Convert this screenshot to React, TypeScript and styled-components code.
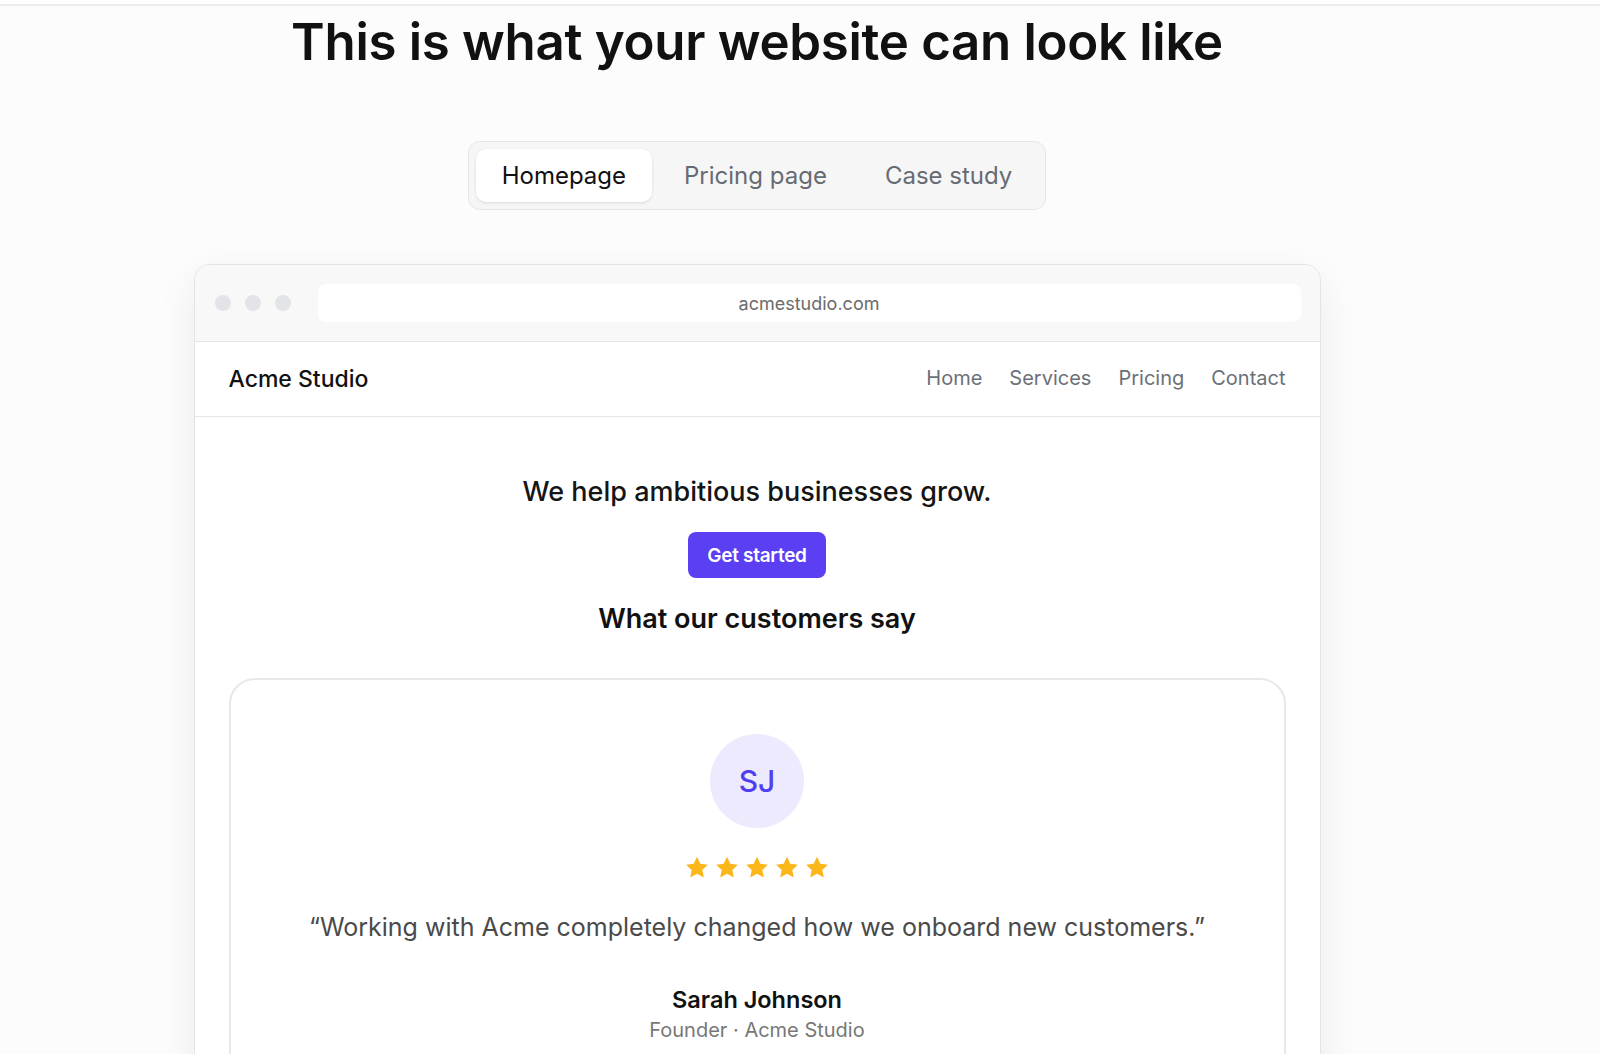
import React from "react";
import styled, { createGlobalStyle } from "styled-components";

const Global = createGlobalStyle`
  html, body { margin: 0; padding: 0; background: #fcfcfc; }
  body { font-family: Inter, "Noto Sans", Arial, sans-serif; color: #111; overflow: hidden; height: 1054px; }
`;

const TopRule = styled.div`
  height: 4px;
  background: #ffffff;
  border-bottom: 2px solid #ececec;
`;

const Column = styled.div`
  width: 1514px;
  display: flex;
  flex-direction: column;
  align-items: center;
`;

const Title = styled.h1`
  margin: 5px 0 0;
  font-size: 51px;
  line-height: 62px;
  font-weight: 600;
  letter-spacing: -0.3px;
  color: #111;
`;

const Tabs = styled.div`
  margin-top: 68px;
  display: flex;
  gap: 6px;
  padding: 7px 7px;
  background: #f6f6f6;
  border: 1px solid #e6e6e6;
  border-radius: 12px;
`;

const Tab = styled.button<{ $active?: boolean }>`
  font-family: Inter, Arial, sans-serif;
  font-size: 24px;
  font-weight: 400;
  height: 53px;
  padding: 0 26px;
  border: none;
  border-radius: 10px;
  background: ${(p) => (p.$active ? "#ffffff" : "transparent")};
  color: ${(p) => (p.$active ? "#111" : "#666b73")};
  box-shadow: ${(p) => (p.$active ? "0 1px 3px rgba(0,0,0,0.12)" : "none")};
`;

const Browser = styled.div`
  margin-top: 54px;
  width: 1125px;
  border: 1px solid #e4e4e6;
  border-radius: 16px;
  background: #fff;
  box-shadow: 0 12px 40px rgba(0, 0, 0, 0.07);
  overflow: hidden;
`;

const ChromeBar = styled.div`
  height: 76px;
  background: #f8f8f9;
  border-bottom: 1px solid #e6e6e8;
  display: flex;
  align-items: center;
  padding: 0 19px 0 20px;
`;

const Dots = styled.div`
  display: flex;
  gap: 14px;
  margin-right: 27px;
`;

const Dot = styled.span`
  width: 16px;
  height: 16px;
  border-radius: 50%;
  background: #e3e4e7;
`;

const UrlBar = styled.div`
  flex: 1;
  height: 38px;
  border-radius: 8px;
  background: #fff;
  display: flex;
  align-items: center;
  justify-content: center;
  font-size: 18px;
  color: #6b6b6b;
`;

const Nav = styled.div`
  height: 74px;
  display: flex;
  align-items: center;
  justify-content: space-between;
  padding: 0 34px;
  border-bottom: 1px solid #e6e6e8;
`;

const Brand = styled.div`
  font-size: 23px;
  font-weight: 500;
  color: #111;
`;

const NavLinks = styled.div`
  display: flex;
  gap: 27px;
  font-size: 20px;
  color: #6b7078;
  margin-top: -3px;
`;

const Hero = styled.div`
  display: flex;
  flex-direction: column;
  align-items: center;
  padding: 58px 34px 0;
`;

const Headline = styled.div`
  font-size: 27px;
  font-weight: 500;
  line-height: 33px;
  color: #151515;
`;

const Cta = styled.button`
  margin-top: 24px;
  height: 46px;
  padding: 0 19px;
  border: none;
  border-radius: 8px;
  background: #5a3ff3;
  color: #fff;
  font-family: Inter, Arial, sans-serif;
  font-size: 19px;
  font-weight: 600;
  letter-spacing: -0.3px;
`;

const SectionTitle = styled.div`
  margin-top: 24px;
  font-size: 27px;
  font-weight: 600;
  line-height: 33px;
  color: #111;
`;

const Card = styled.div`
  margin-top: 43px;
  align-self: stretch;
  border: 2px solid #e8e8ea;
  border-radius: 26px;
  display: flex;
  flex-direction: column;
  align-items: center;
  padding: 54px 20px 40px;
`;

const Avatar = styled.div`
  width: 94px;
  height: 94px;
  border-radius: 50%;
  background: #eeeafd;
  color: #4f3ff0;
  font-size: 30px;
  font-weight: 500;
  display: flex;
  align-items: center;
  justify-content: center;
`;

const Stars = styled.div`
  margin-top: 28px;
  display: flex;
  gap: 6px;
`;

const Quote = styled.div`
  margin-top: 32px;
  font-size: 25px;
  line-height: 33px;
  color: #4a4a4a;
`;

const Name = styled.div`
  margin-top: 41px;
  font-size: 23.5px;
  font-weight: 600;
  color: #111;
`;

const Role = styled.div`
  margin-top: 4px;
  font-size: 20px;
  color: #777;
`;

const Star = () => (
  <svg width="24" height="23" viewBox="0 0 24 23">
    <path
      d="M12 0.8l3.3 7 7.6 0.9-5.6 5.2 1.5 7.6L12 17.7l-6.8 3.8 1.5-7.6L1.1 8.7l7.6-0.9z"
      fill="#fbb71a"
    />
  </svg>
);

export default function App() {
  return (
    <>
      <Global />
      <TopRule />
      <Column>
        <Title>This is what your website can look like</Title>
        <Tabs>
          <Tab $active>Homepage</Tab>
          <Tab>Pricing page</Tab>
          <Tab>Case study</Tab>
        </Tabs>
        <Browser>
          <ChromeBar>
            <Dots>
              <Dot />
              <Dot />
              <Dot />
            </Dots>
            <UrlBar>acmestudio.com</UrlBar>
          </ChromeBar>
          <Nav>
            <Brand>Acme Studio</Brand>
            <NavLinks>
              <span>Home</span>
              <span>Services</span>
              <span>Pricing</span>
              <span>Contact</span>
            </NavLinks>
          </Nav>
          <Hero>
            <Headline>We help ambitious businesses grow.</Headline>
            <Cta>Get started</Cta>
            <SectionTitle>What our customers say</SectionTitle>
            <Card>
              <Avatar>SJ</Avatar>
              <Stars>
                <Star />
                <Star />
                <Star />
                <Star />
                <Star />
              </Stars>
              <Quote>“Working with Acme completely changed how we onboard new customers.”</Quote>
              <Name>Sarah Johnson</Name>
              <Role>Founder · Acme Studio</Role>
            </Card>
          </Hero>
        </Browser>
      </Column>
    </>
  );
}
